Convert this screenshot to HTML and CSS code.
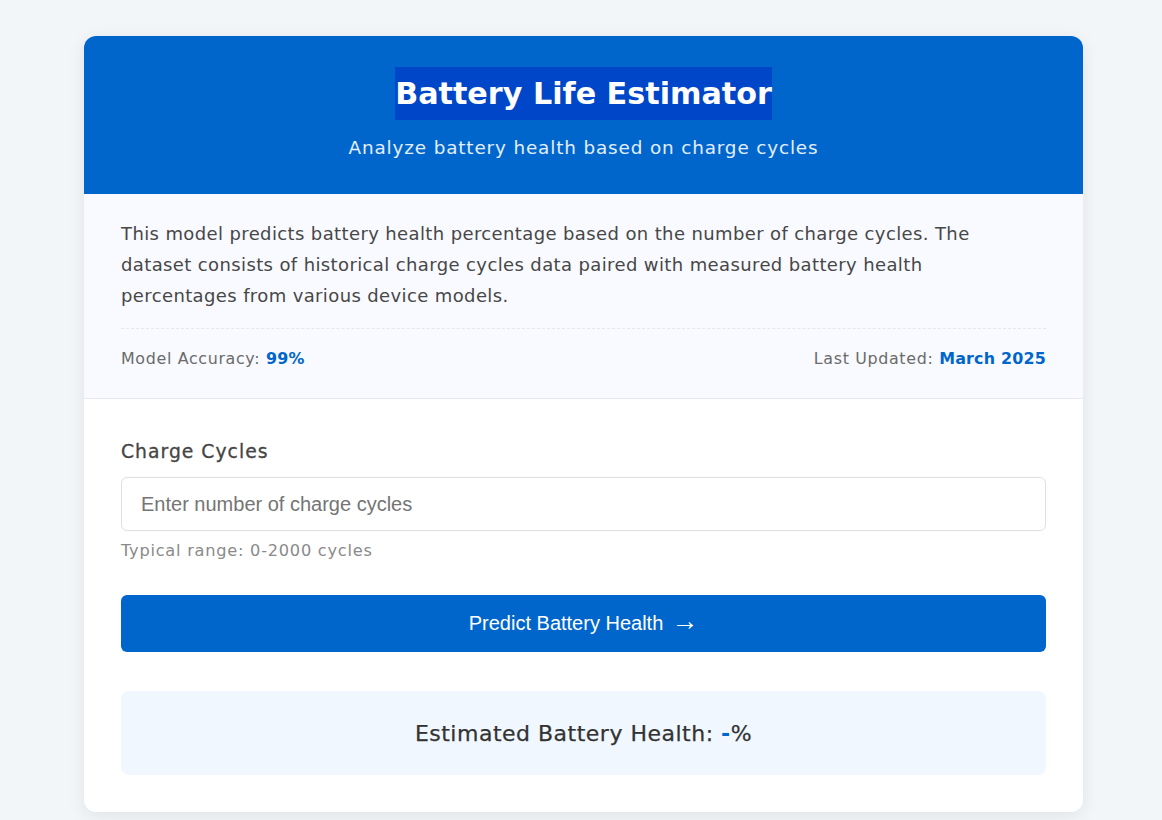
FILE: index.html
```html
<!DOCTYPE html>
<html lang="en">
<head>
<meta charset="utf-8">
<title>Battery Life Estimator</title>
<link rel="stylesheet" href="styles.css">
</head>
<body>
<div class="card">
  <header class="hero">
    <h1 class="title"><span class="sel">Battery Life Estimator</span></h1>
    <p class="subtitle">Analyze battery health based on charge cycles</p>
  </header>
  <section class="info">
    <p class="desc">This model predicts battery health percentage based on the number of charge cycles. The dataset consists of historical charge cycles data paired with measured battery health percentages from various device models.</p>
    <div class="meta">
      <div>Model Accuracy: <strong>99%</strong></div>
      <div>Last Updated: <strong>March 2025</strong></div>
    </div>
  </section>
  <section class="form">
    <label class="label" for="cycles">Charge Cycles</label>
    <input id="cycles" class="input" type="number" placeholder="Enter number of charge cycles">
    <div class="hint">Typical range: 0-2000 cycles</div>
    <button class="btn" type="button">Predict Battery Health <span class="arrow">→</span></button>
    <div class="result">Estimated Battery Health: <span class="val">-</span>%</div>
  </section>
</div>
</body>
</html>
```
FILE: styles.css
```css
* { box-sizing: border-box; }
html, body { margin: 0; padding: 0; }
body {
  background: #f3f6f9;
  font-family: "DejaVu Sans", "Open Sans", sans-serif;
  padding: 36px 0 40px 5px;
}
.card {
  width: 999px;
  margin: 0 auto;
  background: #fff;
  border-radius: 12px;
  overflow: hidden;
  box-shadow: 0 4px 18px rgba(0, 0, 0, 0.08);
}
.hero {
  background: #0066cc;
  padding: 31px 37px 33px;
  text-align: center;
  color: #fff;
}
.title {
  margin: 0;
  font-size: 30.2px;
  font-weight: 700;
  line-height: 53px;
  height: 53px;
}
.sel {
  display: inline-block;
  background: #0046c8;
  line-height: 53px;
}
.subtitle {
  margin: 14px 0 0;
  font-size: 18.4px;
  letter-spacing: 0.85px;
  line-height: 27px;
  color: #e3eeff;
}
.info {
  background: #f8faff;
  padding: 24px 37px 27px;
  border-bottom: 1px solid #e4e9f0;
}
.desc {
  margin: 0 0 17px;
  max-width: 900px;
  font-size: 18px;
  letter-spacing: 0.38px;
  line-height: 31px;
  color: #474747;
}
.meta {
  display: flex;
  justify-content: space-between;
  border-top: 1px dashed #e3e7ee;
  padding-top: 18px;
  font-size: 15.9px;
  letter-spacing: 0.65px;
  line-height: 24px;
  color: #6b6b6b;
}
.meta strong { color: #0066cc; font-weight: 700; letter-spacing: 0.2px; }
.form {
  padding: 39px 37px 37px;
  display: flex;
  flex-direction: column;
}
.label {
  font-size: 18.8px;
  letter-spacing: 1px;
  line-height: 27px;
  color: #454545;
  -webkit-text-stroke: 0.3px #454545;
}
.input {
  margin-top: 12px;
  height: 54px;
  border: 1px solid #dcdfe4;
  border-radius: 6px;
  padding: 0 19px;
  font-family: "Liberation Sans", Arial, sans-serif;
  font-size: 20px;
  color: #333;
  background: #fff;
  outline: none;
}
.input::placeholder { color: #757575; }
.hint {
  margin-top: 9px;
  font-size: 16.2px;
  letter-spacing: 0.75px;
  line-height: 22px;
  color: #8a8a8a;
}
.btn {
  margin-top: 33px;
  height: 57px;
  border: 0;
  border-radius: 6px;
  background: #0066cc;
  color: #fff;
  font-family: "Liberation Sans", Arial, sans-serif;
  font-size: 20px;
  display: flex;
  align-items: center;
  justify-content: center;
}
.arrow {
  margin-left: 8px;
  margin-bottom: 4px;
  font-family: "Liberation Sans", Arial, sans-serif;
  font-size: 27px;
  line-height: 1;
}
.result {
  margin-top: 39px;
  height: 84px;
  border-radius: 8px;
  background: #f0f7ff;
  display: flex;
  align-items: center;
  justify-content: center;
  font-size: 22px;
  letter-spacing: 0.5px;
  color: #333;
  -webkit-text-stroke: 0.25px #333;
  white-space: pre;
}
.val { color: #0066cc; font-weight: 700; -webkit-text-stroke: 0; }
```
